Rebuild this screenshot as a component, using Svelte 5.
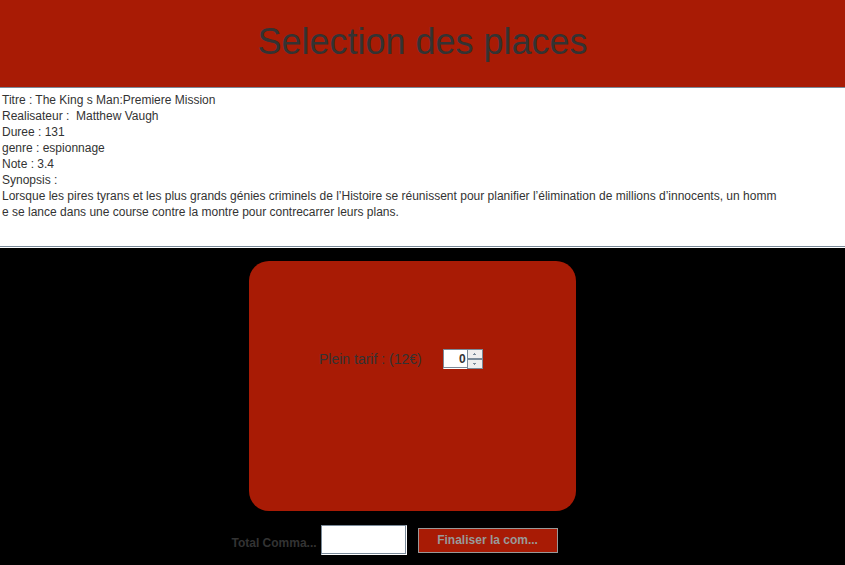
<script>
  let details = $state(
    [
      'Titre : The King s Man:Premiere Mission',
      'Realisateur :  Matthew Vaugh',
      'Duree : 131',
      'genre : espionnage',
      'Note : 3.4',
      'Synopsis :',
      'Lorsque les pires tyrans et les plus grands génies criminels de l’Histoire se réunissent pour planifier l’élimination de millions d’innocents, un homm',
      'e se lance dans une course contre la montre pour contrecarrer leurs plans.'
    ].join('\n')
  );
  let seats = $state(0);
  let total = $state('');

  function step(delta) {
    seats = Math.max(0, Number(seats) + delta);
  }
</script>

<main>
  <header>
    <h1>Selection des places</h1>
  </header>

  <textarea class="details" aria-label="Film" bind:value={details}></textarea>

  <section class="stage">
    <div class="card">
      <label for="seats">Plein tarif : (12€)</label>
      <div class="spinner">
        <input id="seats" type="text" inputmode="numeric" bind:value={seats} />
        <div class="steps">
          <button type="button" aria-label="Plus" onclick={() => step(1)}>
            <svg width="3" height="2" viewBox="0 0 3 2" shape-rendering="crispEdges"><path d="M1 0h1v1h1v1H0V1h1z" /></svg>
          </button>
          <button type="button" aria-label="Moins" onclick={() => step(-1)}>
            <svg width="3" height="2" viewBox="0 0 3 2" shape-rendering="crispEdges"><path d="M0 0h3v1H2v1H1V1H0z" /></svg>
          </button>
        </div>
      </div>
    </div>

    <div class="order">
      <label for="total">Total Comma...</label>
      <input id="total" type="text" bind:value={total} />
      <button type="button">Finaliser la com...</button>
    </div>
  </section>
</main>

<style>
  :global(body) {
    background: #000;
  }

  main {
    font-family: "Liberation Sans", Arial, sans-serif;
    font-size: 12px;
    color: #333;
    background: #000;
    min-height: 100vh;
  }

  header {
    background: #a81b05;
    padding: 20px 0 23px;
    text-align: center;
  }

  h1 {
    margin: 0;
    font-size: 36px;
    line-height: 44px;
    font-weight: 400;
  }

  .details {
    display: block;
    box-sizing: border-box;
    width: 100%;
    height: 161px;
    margin: 0;
    padding: 4px 0 0 2px;
    border: 0;
    border-top: 1px solid #7a8a99;
    border-bottom: 1px solid #fff;
    border-radius: 0;
    background: #fff;
    box-shadow: inset 0 -1px #7a8a99;
    color: #333;
    font: inherit;
    line-height: 16px;
    white-space: pre;
    overflow: hidden;
    resize: none;
    outline: none;
  }

  .stage {
    display: flex;
    flex-direction: column;
    align-items: center;
    padding: 13px 20px 10px 0;
  }

  .card {
    box-sizing: border-box;
    display: flex;
    align-items: flex-start;
    gap: 21px;
    width: 327px;
    height: 250px;
    padding: 88px 0 0 70px;
    border-radius: 20px;
    background: #a81b05;
  }

  .card label {
    font-size: 14px;
    line-height: 20px;
    white-space: nowrap;
  }

  .spinner {
    display: flex;
    width: 40px;
    height: 20px;
  }

  .spinner input {
    box-sizing: border-box;
    width: 24px;
    height: 20px;
    padding: 0 1px 0 0;
    border: 1px solid #7a8a99;
    border-right: 0;
    border-bottom-color: #fff;
    border-radius: 0;
    background: #fff;
    box-shadow: inset 0 -1px #7a8a99;
    color: #333;
    font: bold 12px "Liberation Sans", Arial, sans-serif;
    text-align: right;
    outline: none;
  }

  .steps {
    display: flex;
    flex-direction: column;
    width: 16px;
  }

  .steps button {
    display: flex;
    align-items: center;
    justify-content: center;
    box-sizing: border-box;
    height: 10px;
    padding: 0;
    border: 1px solid #7a8a99;
    border-radius: 0;
    background: #eee;
  }

  .steps path {
    fill: #7a8a99;
  }

  .order {
    display: flex;
    align-items: center;
    margin-top: 14px;
    padding-right: 36px;
    font-weight: 700;
  }

  .order label {
    padding: 5px 4px 0 0;
    line-height: 16px;
  }

  .order input {
    box-sizing: border-box;
    width: 86px;
    height: 30px;
    margin-right: 11px;
    padding: 0 2px;
    border: 1px solid #7a8a99;
    border-right-color: #fff;
    border-bottom-color: #fff;
    border-radius: 0;
    background: #fff;
    box-shadow: inset -1px -1px #7a8a99;
    color: #333;
    font: inherit;
    outline: none;
  }

  .order button {
    box-sizing: border-box;
    width: 140px;
    height: 25px;
    padding: 0;
    border: 1px solid #999;
    border-radius: 0;
    background: #a81b05;
    color: #999;
    font: inherit;
  }
</style>
